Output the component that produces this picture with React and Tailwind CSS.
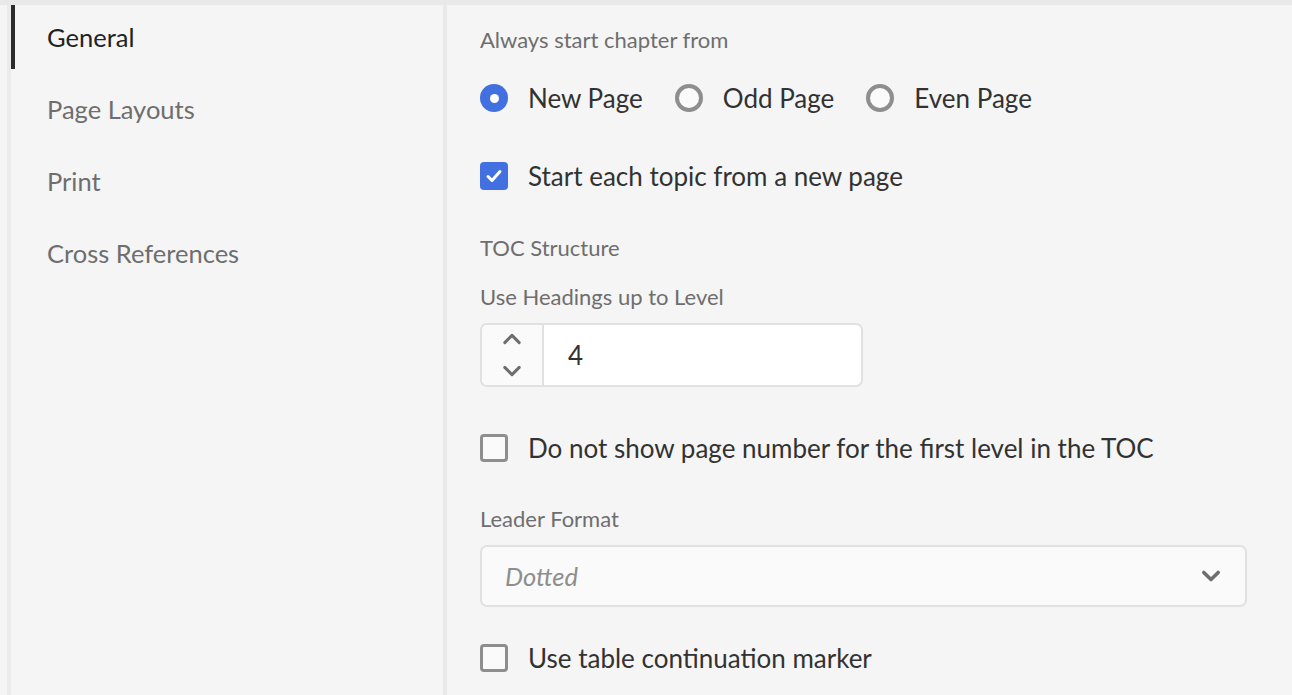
import React from 'react';

const font = { fontFamily: 'Lato, "Open Sans", sans-serif' };

const Radio = ({ checked, label }) => (
  <label className="flex items-center gap-[20px]">
    {checked ? (
      <span className="w-[28px] h-[28px] rounded-full bg-[#4270e0] flex items-center justify-center">
        <span className="w-[9px] h-[9px] rounded-full bg-white" />
      </span>
    ) : (
      <span className="w-[28px] h-[28px] rounded-full border-[4px] border-[#8e8e8e] bg-[#fafafa]" />
    )}
    <span className="text-[26px] leading-[30px] text-[#323232]">{label}</span>
  </label>
);

const Check = ({ checked, label }) => (
  <label className="flex items-center gap-[20px] h-[30px]">
    {checked ? (
      <span className="w-[28px] h-[28px] rounded-[4px] bg-[#4270e0] flex items-center justify-center">
        <svg width="18" height="18" viewBox="0 0 18 18" fill="none">
          <path d="M3 9.5l4 4 8-9" stroke="white" strokeWidth="3" strokeLinecap="round" strokeLinejoin="round" />
        </svg>
      </span>
    ) : (
      <span className="w-[28px] h-[28px] rounded-[4px] border-[3px] border-[#8e8e8e] bg-[#fafafa]" />
    )}
    <span className="text-[26px] leading-[30px] text-[#323232]">{label}</span>
  </label>
);

const Chevron = ({ up, size = 20, stroke = 2.5 }) => (
  <svg width={size} height={size} viewBox="0 0 20 20" fill="none">
    <path
      d={up ? 'M4 13l6-6 6 6' : 'M4 7l6 6 6-6'}
      stroke="#6e6e6e"
      strokeWidth={stroke}
      strokeLinecap="round"
      strokeLinejoin="round"
    />
  </svg>
);

const navItems = ['General', 'Page Layouts', 'Print', 'Cross References'];

export default function App() {
  return (
    <div className="w-[1292px] h-[695px] bg-[#f5f5f5] flex flex-col overflow-hidden" style={font}>
      {/* top strip */}
      <div className="h-[5px] bg-[#e9e9e9] shrink-0" />

      <div className="flex flex-1 min-h-0 pl-[7px]">
        {/* sidebar */}
        <nav className="w-[436px] border-l-4 border-[#ebebeb] flex flex-col gap-[8px]">
          {navItems.map((item, i) => (
            <div
              key={item}
              className={`h-[64px] flex items-center pl-[32px] text-[25.5px] ${
                i === 0 ? 'border-l-4 border-[#2c2c2c] text-[#222222]' : 'border-l-4 border-transparent text-[#6e6e6e]'
              }`}
            >
              {item}
            </div>
          ))}
        </nav>

        <div className="w-[4px] bg-[#e9e9e9]" />

        {/* content */}
        <div className="flex-1 pl-[33px] pt-[20px] flex flex-col">
          <p className="text-[22px] leading-[30px] text-[#6e6e6e]">Always start chapter from</p>

          <div className="flex items-center mt-[28px] h-[30px]">
            <Radio checked label="New Page" />
            <div className="ml-[32px]">
              <Radio label="Odd Page" />
            </div>
            <div className="ml-[32px]">
              <Radio label="Even Page" />
            </div>
          </div>

          <div className="mt-[48px]">
            <Check checked label="Start each topic from a new page" />
          </div>

          <p className="mt-[42px] text-[22px] leading-[30px] text-[#6e6e6e]">TOC Structure</p>
          <p className="mt-[19px] text-[22px] leading-[30px] text-[#6e6e6e]">Use Headings up to Level</p>

          <div className="mt-[11px] w-[383px] h-[64px] flex border-2 border-[#e1e1e1] rounded-[7px] overflow-hidden bg-white">
            <div className="w-[62px] bg-[#fafafa] border-r-2 border-[#e1e1e1] flex flex-col items-center justify-between py-[2px]">
              <Chevron up size={24} />
              <Chevron size={24} />
            </div>
            <div className="flex-1 flex items-center pl-[24px] text-[26px] text-[#323232]">4</div>
          </div>

          <div className="mt-[46px]">
            <Check label="Do not show page number for the first level in the TOC" />
          </div>

          <p className="mt-[41px] text-[22px] leading-[30px] text-[#6e6e6e]">Leader Format</p>

          <div className="mt-[11px] w-[767px] h-[62px] flex items-center justify-between border-2 border-[#e1e1e1] rounded-[7px] bg-[#fafafa] pl-[23px] pr-[22px]">
            <span className="text-[25.5px] italic text-[#8e8e8e]">Dotted</span>
            <Chevron size={24} stroke={3} />
          </div>

          <div className="mt-[36px]">
            <Check label="Use table continuation marker" />
          </div>
        </div>
      </div>
    </div>
  );
}
